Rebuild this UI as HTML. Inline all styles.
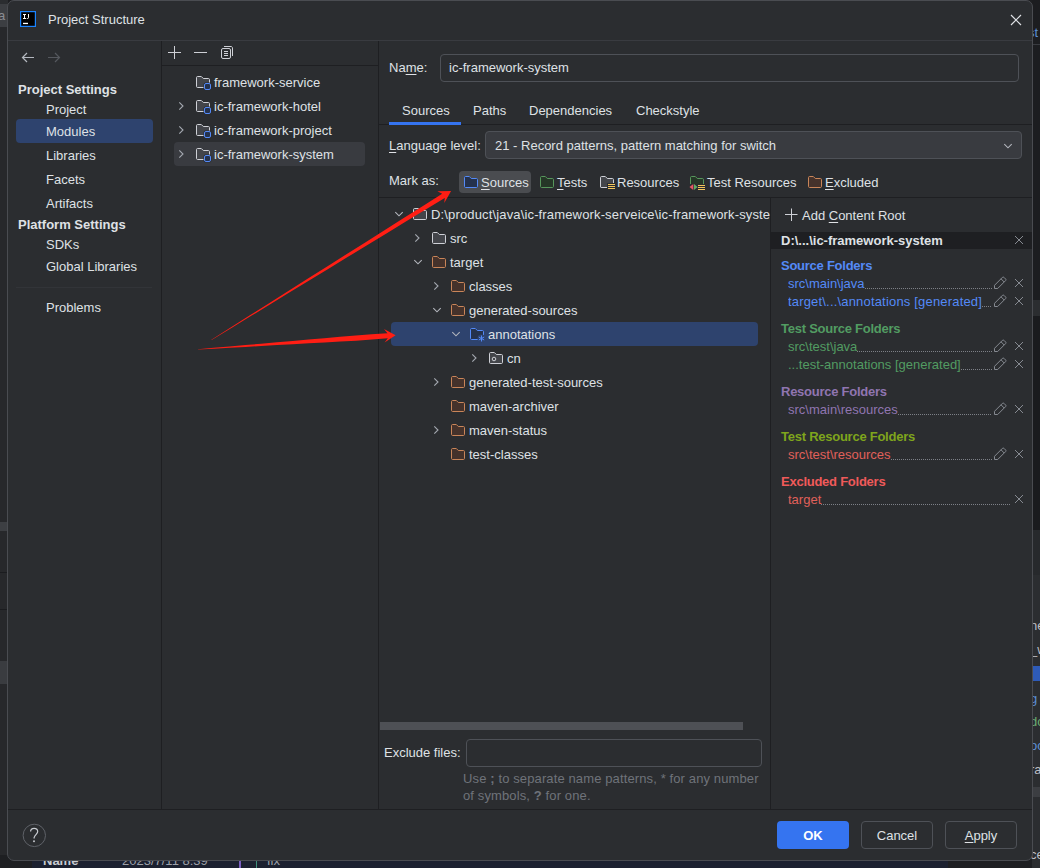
<!DOCTYPE html>
<html><head><meta charset="utf-8">
<style>
*{box-sizing:border-box;margin:0;padding:0}
html,body{width:1040px;height:868px;overflow:hidden;background:#1e1f22;font-family:"Liberation Sans",sans-serif;font-size:13px;color:#dfe1e5}
.a{position:absolute}
.t{position:absolute;white-space:nowrap;line-height:16px;height:16px}
.b{font-weight:bold}
.dlg{position:absolute;left:7px;top:0;width:1026px;height:861px;background:#2b2d30;border:1px solid #4a4c51;border-radius:7px;overflow:hidden}
.hl{position:absolute;height:1px;background:#1e1f22}
.vl{position:absolute;width:1px;background:#1e1f22}
u{text-decoration:underline;text-underline-offset:2px;text-decoration-thickness:1px}
svg.i{position:absolute;width:16px;height:16px;overflow:visible}
.fr{display:flex;height:16px;line-height:16px;white-space:nowrap;overflow:hidden}
.fr span{flex:none}
.fr i{flex:1;min-width:0;background-image:linear-gradient(to right,#7d8087 50%,transparent 50%);background-size:2px 1px;background-repeat:repeat-x;background-position:0 12px}
.dots{position:absolute;height:1px;background-image:linear-gradient(to right,#6f737a 50%,transparent 50%);background-size:2px 1px}
</style></head><body>


<!-- background bits -->
<div class="a" style="left:0;top:0;width:8px;height:868px;background:#27282b"></div>
<div class="a" style="left:0;top:0;width:8px;height:4px;background:#2b2d30"></div>
<div class="a" style="left:0;top:4px;width:8px;height:23px;background:#3c3e42"></div>
<div class="t" style="left:-2px;top:8px;color:#8a8d93">a</div>
<div class="a" style="left:0;top:522px;width:8px;height:9px;background:#3d3f43"></div>
<div class="a" style="left:0;top:572px;width:8px;height:1px;background:#1b1c1f"></div>
<div class="a" style="left:0;top:609px;width:8px;height:1px;background:#1b1c1f"></div>
<div class="a" style="left:0;top:661px;width:8px;height:23px;background:#3a3c40"></div>
<div class="a" style="left:0;top:855px;width:32px;height:13px;background:#1e1f22"></div>
<div class="a" style="left:32px;top:855px;width:916px;height:13px;background:#1c2130;overflow:hidden"><div class="t b" style="left:11px;top:-2px;color:#c9ccd2">Name</div><div class="t" style="left:90px;top:-2px;color:#9da0a8">2023/7/11 8:39</div><div class="t" style="left:235px;top:-2px;color:#9da0a8">fix</div><div class="a" style="left:207px;top:0;width:2px;height:13px;background:#7b5fc0"></div><div class="a" style="left:224px;top:0;width:1px;height:13px;background:#3f8f7a"></div></div>
<div class="a" style="left:948px;top:855px;width:92px;height:13px;background:#1e1f22"></div>
<div class="a" style="left:1032px;top:0;width:8px;height:868px;background:#1c1d20"></div>
<div class="a" style="left:1032px;top:44px;width:8px;height:1px;background:#393b40"></div>
<div class="a" style="left:1032px;top:300px;width:8px;height:16px;background:#2b2d30"></div>
<div class="a" style="left:1032px;top:316px;width:8px;height:214px;background:#1a1b1e"></div>
<div class="a" style="left:1032px;top:530px;width:8px;height:45px;background:#27292c"></div>
<div class="a" style="left:1032px;top:575px;width:8px;height:293px;background:#2b2d30"></div>
<div class="a" style="left:1032px;top:666px;width:8px;height:15px;background:#2e5bb8"></div>
<div class="a" style="left:1032px;top:787px;width:8px;height:10px;background:#3c3e42"></div>
<div class="a" style="left:1030px;top:0;width:10px;height:868px;overflow:hidden">
<div class="t" style="left:-2px;top:25px;color:#5c8fd6">st</div>
<div class="t" style="left:0;top:618px;color:#bcbec4">ne</div>
<div class="t" style="left:0;top:642px;color:#bcbec4">_w</div>
<div class="t" style="left:0;top:691px;color:#5c8fd6">g</div>
<div class="t" style="left:0;top:714px;color:#6aab73">do</div>
<div class="t" style="left:0;top:738px;color:#5c8fd6">oc</div>
<div class="t" style="left:0;top:762px;color:#bcbec4">ra</div>
<div class="t" style="left:0;top:847px;color:#bcbec4">ce</div>
</div>
<div class="dlg"></div>

<!-- title -->
<svg class="a" style="left:20px;top:11px" width="16" height="16" viewBox="0 0 16 16"><rect x="0.6" y="0.6" width="14.8" height="14.8" fill="#000" stroke="#1a84ff" stroke-width="1.2"/><path d="M3 3.5H6M4.5 3.5V7.5M3 7.5H6M6.8 7.5H7.6C8.1 7.5 8.5 7.2 8.5 6.7V3" fill="none" stroke="#fff" stroke-width="1"/><rect x="3" y="11.8" width="5" height="1.3" fill="#fff"/></svg>
<div class="t" style="left:48px;top:12px">Project Structure</div>
<svg class="i" style="left:1008px;top:12px" viewBox="0 0 16 16"><path d="M3 3L13 13M13 3L3 13" stroke="#dfe1e5" stroke-width="1.2"/></svg>
<div class="hl" style="left:8px;top:40px;width:1024px;background:#393b40"></div>

<!-- sidebar -->
<div class="vl" style="left:161px;top:41px;height:769px"></div>
<div class="vl" style="left:378px;top:41px;height:769px"></div>
<svg class="i" style="left:19px;top:50px" viewBox="0 0 16 16"><path d="M15 7.5H3.5M8 3L3.5 7.5L8 12" fill="none" stroke="#b4b8bf" stroke-width="1.2"/></svg>
<svg class="i" style="left:46px;top:50px" viewBox="0 0 16 16"><path d="M2 7.5H13.5M9 3L13.5 7.5L9 12" fill="none" stroke="#55585e" stroke-width="1.2"/></svg>
<div class="t b" style="left:18px;top:82px">Project Settings</div>
<div class="t" style="left:46px;top:102px">Project</div>
<div class="a" style="left:16px;top:119px;width:137px;height:24px;background:#2e436e;border-radius:4px"></div>
<div class="t" style="left:46px;top:124px">Modules</div>
<div class="t" style="left:46px;top:148px">Libraries</div>
<div class="t" style="left:46px;top:172px">Facets</div>
<div class="t" style="left:46px;top:196px">Artifacts</div>
<div class="t b" style="left:18px;top:217px">Platform Settings</div>
<div class="t" style="left:46px;top:237px">SDKs</div>
<div class="t" style="left:46px;top:259px">Global Libraries</div>
<div class="hl" style="left:16px;top:287px;width:136px;background:#323438"></div>
<div class="t" style="left:46px;top:300px">Problems</div>

<!-- middle -->
<svg class="i" style="left:167px;top:44px" viewBox="0 0 16 16"><path d="M7.5 2V15M1 8.5H14" stroke="#ced0d6" stroke-width="1"/></svg>
<svg class="i" style="left:192px;top:44px" viewBox="0 0 16 16"><path d="M2 8.5H15" stroke="#ced0d6" stroke-width="1"/></svg>
<svg class="i" style="left:219px;top:44px" viewBox="0 0 16 16"><path d="M5 2.5H12C12.8 2.5 13.5 3.2 13.5 4V12" fill="none" stroke="#ced0d6"/><rect x="2.5" y="4.5" width="9" height="10" rx="1.5" fill="none" stroke="#ced0d6"/><path d="M5 7.5H9M5 9.5H9M5 11.5H9" stroke="#ced0d6"/></svg>
<div class="hl" style="left:162px;top:65px;width:216px"></div>
<div class="a" style="left:174px;top:142px;width:191px;height:24px;background:#393b40;border-radius:4px"></div>
<svg class="i" style="left:195px;top:74px" viewBox="0 0 16 16"><path d="M1.5 3.5C1.5 2.95 1.95 2.5 2.5 2.5H6.3L8.3 4.5H13.5C14.05 4.5 14.5 4.95 14.5 5.5V12.5C14.5 13.05 14.05 13.5 13.5 13.5H2.5C1.95 13.5 1.5 13.05 1.5 12.5Z" fill="#43454a" stroke="#ced0d6"/><rect x="8.5" y="8.5" width="8" height="8" rx="2" fill="#2b2d30"/><rect x="9.5" y="9.5" width="6" height="6" rx="1.5" fill="#25324d" stroke="#548af7"/></svg>
<div class="t" style="left:214px;top:75px">framework-service</div>
<svg class="i" style="left:174px;top:98px" viewBox="0 0 16 16"><path d="M5.3 4.3L9 8L5.3 11.7" fill="none" stroke="#a4a8b0" stroke-width="1.1"/></svg>
<svg class="i" style="left:195px;top:98px" viewBox="0 0 16 16"><path d="M1.5 3.5C1.5 2.95 1.95 2.5 2.5 2.5H6.3L8.3 4.5H13.5C14.05 4.5 14.5 4.95 14.5 5.5V12.5C14.5 13.05 14.05 13.5 13.5 13.5H2.5C1.95 13.5 1.5 13.05 1.5 12.5Z" fill="#43454a" stroke="#ced0d6"/><rect x="8.5" y="8.5" width="8" height="8" rx="2" fill="#2b2d30"/><rect x="9.5" y="9.5" width="6" height="6" rx="1.5" fill="#25324d" stroke="#548af7"/></svg>
<div class="t" style="left:214px;top:99px">ic-framework-hotel</div>
<svg class="i" style="left:174px;top:122px" viewBox="0 0 16 16"><path d="M5.3 4.3L9 8L5.3 11.7" fill="none" stroke="#a4a8b0" stroke-width="1.1"/></svg>
<svg class="i" style="left:195px;top:122px" viewBox="0 0 16 16"><path d="M1.5 3.5C1.5 2.95 1.95 2.5 2.5 2.5H6.3L8.3 4.5H13.5C14.05 4.5 14.5 4.95 14.5 5.5V12.5C14.5 13.05 14.05 13.5 13.5 13.5H2.5C1.95 13.5 1.5 13.05 1.5 12.5Z" fill="#43454a" stroke="#ced0d6"/><rect x="8.5" y="8.5" width="8" height="8" rx="2" fill="#2b2d30"/><rect x="9.5" y="9.5" width="6" height="6" rx="1.5" fill="#25324d" stroke="#548af7"/></svg>
<div class="t" style="left:214px;top:123px">ic-framework-project</div>
<svg class="i" style="left:174px;top:146px" viewBox="0 0 16 16"><path d="M5.3 4.3L9 8L5.3 11.7" fill="none" stroke="#a4a8b0" stroke-width="1.1"/></svg>
<svg class="i" style="left:195px;top:146px" viewBox="0 0 16 16"><path d="M1.5 3.5C1.5 2.95 1.95 2.5 2.5 2.5H6.3L8.3 4.5H13.5C14.05 4.5 14.5 4.95 14.5 5.5V12.5C14.5 13.05 14.05 13.5 13.5 13.5H2.5C1.95 13.5 1.5 13.05 1.5 12.5Z" fill="#43454a" stroke="#ced0d6"/><rect x="8.5" y="8.5" width="8" height="8" rx="2" fill="#2b2d30"/><rect x="9.5" y="9.5" width="6" height="6" rx="1.5" fill="#25324d" stroke="#548af7"/></svg>
<div class="t" style="left:214px;top:147px">ic-framework-system</div>

<!-- right top -->
<div class="t" style="left:389px;top:60px">Na<u>m</u>e:</div>
<div class="a" style="left:440px;top:54px;width:579px;height:28px;border:1px solid #4e5157;border-radius:4px"></div>
<div class="t" style="left:449px;top:60px">ic-framework-system</div>

<div class="t" style="left:402px;top:103px">Sources</div>
<div class="t" style="left:473px;top:103px">Paths</div>
<div class="t" style="left:529px;top:103px">Dependencies</div>
<div class="t" style="left:636px;top:103px">Checkstyle</div>
<div class="hl" style="left:379px;top:124px;width:653px"></div>
<div class="a" style="left:389px;top:122px;width:72px;height:3px;background:#3574f0"></div>

<div class="t" style="left:389px;top:138px"><u>L</u>anguage level:</div>
<div class="a" style="left:485px;top:131px;width:537px;height:28px;background:#393b40;border:1px solid #4e5157;border-radius:4px"></div>
<div class="t" style="left:495px;top:138px">21 - Record patterns, pattern matching for switch</div>
<svg class="i" style="left:1000px;top:138px" viewBox="0 0 16 16"><path d="M4.3 6.2L8 9.8L11.7 6.2" fill="none" stroke="#b4b7be" stroke-width="1.1"/></svg>

<div class="t" style="left:389px;top:173px">Mark as:</div>
<div class="a" style="left:459px;top:171px;width:72px;height:22px;background:#4a4c50;border-radius:4px"></div>
<svg class="i" style="left:463px;top:174px" viewBox="0 0 16 16"><path d="M1.5 3.5C1.5 2.95 1.95 2.5 2.5 2.5H6.3L8.3 4.5H13.5C14.05 4.5 14.5 4.95 14.5 5.5V12.5C14.5 13.05 14.05 13.5 13.5 13.5H2.5C1.95 13.5 1.5 13.05 1.5 12.5Z" fill="#25324d" stroke="#548af7"/></svg>
<div class="t" style="left:481px;top:175px"><u>S</u>ources</div>
<svg class="i" style="left:539px;top:174px" viewBox="0 0 16 16"><path d="M1.5 3.5C1.5 2.95 1.95 2.5 2.5 2.5H6.3L8.3 4.5H13.5C14.05 4.5 14.5 4.95 14.5 5.5V12.5C14.5 13.05 14.05 13.5 13.5 13.5H2.5C1.95 13.5 1.5 13.05 1.5 12.5Z" fill="#253627" stroke="#57965c"/></svg>
<div class="t" style="left:557px;top:175px"><u>T</u>ests</div>
<svg class="i" style="left:599px;top:174px" viewBox="0 0 16 16"><path d="M1.5 3.5C1.5 2.95 1.95 2.5 2.5 2.5H6.3L8.3 4.5H13.5C14.05 4.5 14.5 4.95 14.5 5.5V12.5C14.5 13.05 14.05 13.5 13.5 13.5H2.5C1.95 13.5 1.5 13.05 1.5 12.5Z" fill="#43454a" stroke="#ced0d6"/><rect x="8" y="9" width="9" height="7" fill="#2b2d30"/><path d="M1.5 9V12.5C1.5 13.05 1.95 13.5 2.5 13.5H8" fill="none" stroke="#ced0d6"/><path d="M9 10.5H16M9 12.5H16M9 14.5H16" stroke="#f2c55c" stroke-width="1.2"/></svg>
<div class="t" style="left:617px;top:175px">Resources</div>
<svg class="i" style="left:689px;top:174px" viewBox="0 0 16 16"><path d="M1.5 3.5C1.5 2.95 1.95 2.5 2.5 2.5H6.3L8.3 4.5H13.5C14.05 4.5 14.5 4.95 14.5 5.5V12.5C14.5 13.05 14.05 13.5 13.5 13.5H2.5C1.95 13.5 1.5 13.05 1.5 12.5Z" fill="#253627" stroke="#57965c"/><rect x="0" y="10" width="17" height="7" fill="#2b2d30"/><path d="M4.3 10L0.5 13L4.3 16Z" fill="#e55765"/><path d="M5 10L8.6 13L5 16Z" fill="#5fad65"/><path d="M9 11.5H16M9 13.5H16M9 15.5H16" stroke="#f2c55c" stroke-width="1.2"/></svg>
<div class="t" style="left:707px;top:175px">Test Resources</div>
<svg class="i" style="left:807px;top:174px" viewBox="0 0 16 16"><path d="M1.5 3.5C1.5 2.95 1.95 2.5 2.5 2.5H6.3L8.3 4.5H13.5C14.05 4.5 14.5 4.95 14.5 5.5V12.5C14.5 13.05 14.05 13.5 13.5 13.5H2.5C1.95 13.5 1.5 13.05 1.5 12.5Z" fill="#45322b" stroke="#c98559"/></svg>
<div class="t" style="left:825px;top:175px"><u>E</u>xcluded</div>
<div class="hl" style="left:379px;top:197px;width:653px"></div>
<div class="vl" style="left:770px;top:198px;height:612px"></div>

<!-- tree -->
<div class="a" style="left:391px;top:322px;width:367px;height:24px;background:#2e436e;border-radius:4px"></div>
<svg class="i" style="left:391px;top:206px" viewBox="0 0 16 16"><path d="M4.3 6.2L8 9.8L11.7 6.2" fill="none" stroke="#b4b7be" stroke-width="1.1"/></svg>
<svg class="i" style="left:412px;top:206px" viewBox="0 0 16 16"><path d="M1.5 3.5C1.5 2.95 1.95 2.5 2.5 2.5H6.3L8.3 4.5H13.5C14.05 4.5 14.5 4.95 14.5 5.5V12.5C14.5 13.05 14.05 13.5 13.5 13.5H2.5C1.95 13.5 1.5 13.05 1.5 12.5Z" fill="#43454a" stroke="#ced0d6"/></svg>
<div class="a" style="left:431px;top:198px;width:339px;height:30px;overflow:hidden"><div class="t" style="left:0;top:9px;letter-spacing:0.15px">D:\product\java\ic-framework-serveice\ic-framework-system</div></div>

<svg class="i" style="left:410px;top:230px" viewBox="0 0 16 16"><path d="M5.3 4.3L9 8L5.3 11.7" fill="none" stroke="#a4a8b0" stroke-width="1.1"/></svg>
<svg class="i" style="left:431px;top:230px" viewBox="0 0 16 16"><path d="M1.5 3.5C1.5 2.95 1.95 2.5 2.5 2.5H6.3L8.3 4.5H13.5C14.05 4.5 14.5 4.95 14.5 5.5V12.5C14.5 13.05 14.05 13.5 13.5 13.5H2.5C1.95 13.5 1.5 13.05 1.5 12.5Z" fill="#43454a" stroke="#ced0d6"/></svg>
<div class="t" style="left:450px;top:231px">src</div>

<svg class="i" style="left:410px;top:254px" viewBox="0 0 16 16"><path d="M4.3 6.2L8 9.8L11.7 6.2" fill="none" stroke="#b4b7be" stroke-width="1.1"/></svg>
<svg class="i" style="left:431px;top:254px" viewBox="0 0 16 16"><path d="M1.5 3.5C1.5 2.95 1.95 2.5 2.5 2.5H6.3L8.3 4.5H13.5C14.05 4.5 14.5 4.95 14.5 5.5V12.5C14.5 13.05 14.05 13.5 13.5 13.5H2.5C1.95 13.5 1.5 13.05 1.5 12.5Z" fill="#45322b" stroke="#c98559"/></svg>
<div class="t" style="left:450px;top:255px">target</div>

<svg class="i" style="left:429px;top:278px" viewBox="0 0 16 16"><path d="M5.3 4.3L9 8L5.3 11.7" fill="none" stroke="#a4a8b0" stroke-width="1.1"/></svg>
<svg class="i" style="left:450px;top:278px" viewBox="0 0 16 16"><path d="M1.5 3.5C1.5 2.95 1.95 2.5 2.5 2.5H6.3L8.3 4.5H13.5C14.05 4.5 14.5 4.95 14.5 5.5V12.5C14.5 13.05 14.05 13.5 13.5 13.5H2.5C1.95 13.5 1.5 13.05 1.5 12.5Z" fill="#45322b" stroke="#c98559"/></svg>
<div class="t" style="left:469px;top:279px">classes</div>

<svg class="i" style="left:429px;top:302px" viewBox="0 0 16 16"><path d="M4.3 6.2L8 9.8L11.7 6.2" fill="none" stroke="#b4b7be" stroke-width="1.1"/></svg>
<svg class="i" style="left:450px;top:302px" viewBox="0 0 16 16"><path d="M1.5 3.5C1.5 2.95 1.95 2.5 2.5 2.5H6.3L8.3 4.5H13.5C14.05 4.5 14.5 4.95 14.5 5.5V12.5C14.5 13.05 14.05 13.5 13.5 13.5H2.5C1.95 13.5 1.5 13.05 1.5 12.5Z" fill="#45322b" stroke="#c98559"/></svg>
<div class="t" style="left:469px;top:303px">generated-sources</div>

<svg class="i" style="left:448px;top:326px" viewBox="0 0 16 16"><path d="M4.3 6.2L8 9.8L11.7 6.2" fill="none" stroke="#b4b7be" stroke-width="1.1"/></svg>
<svg class="i" style="left:469px;top:326px" viewBox="0 0 16 16"><path d="M1.5 3.5C1.5 2.95 1.95 2.5 2.5 2.5H6.3L8.3 4.5H13.5C14.05 4.5 14.5 4.95 14.5 5.5V12.5C14.5 13.05 14.05 13.5 13.5 13.5H2.5C1.95 13.5 1.5 13.05 1.5 12.5Z" fill="#25324d" stroke="#548af7"/><circle cx="12.5" cy="12.5" r="4" fill="#2e436e"/><path d="M12.5 9.5V15.5M9.8 11L15.2 14M9.8 14L15.2 11" stroke="#548af7" stroke-width="1"/></svg>
<div class="t" style="left:488px;top:327px">annotations</div>

<svg class="i" style="left:467px;top:350px" viewBox="0 0 16 16"><path d="M5.3 4.3L9 8L5.3 11.7" fill="none" stroke="#a4a8b0" stroke-width="1.1"/></svg>
<svg class="i" style="left:488px;top:350px" viewBox="0 0 16 16"><path d="M1.5 3.5C1.5 2.95 1.95 2.5 2.5 2.5H6.3L8.3 4.5H13.5C14.05 4.5 14.5 4.95 14.5 5.5V12.5C14.5 13.05 14.05 13.5 13.5 13.5H2.5C1.95 13.5 1.5 13.05 1.5 12.5Z" fill="#43454a" stroke="#ced0d6"/><circle cx="6" cy="9" r="1.8" fill="none" stroke="#ced0d6"/></svg>
<div class="t" style="left:507px;top:351px">cn</div>

<svg class="i" style="left:429px;top:374px" viewBox="0 0 16 16"><path d="M5.3 4.3L9 8L5.3 11.7" fill="none" stroke="#a4a8b0" stroke-width="1.1"/></svg>
<svg class="i" style="left:450px;top:374px" viewBox="0 0 16 16"><path d="M1.5 3.5C1.5 2.95 1.95 2.5 2.5 2.5H6.3L8.3 4.5H13.5C14.05 4.5 14.5 4.95 14.5 5.5V12.5C14.5 13.05 14.05 13.5 13.5 13.5H2.5C1.95 13.5 1.5 13.05 1.5 12.5Z" fill="#45322b" stroke="#c98559"/></svg>
<div class="t" style="left:469px;top:375px">generated-test-sources</div>

<svg class="i" style="left:450px;top:398px" viewBox="0 0 16 16"><path d="M1.5 3.5C1.5 2.95 1.95 2.5 2.5 2.5H6.3L8.3 4.5H13.5C14.05 4.5 14.5 4.95 14.5 5.5V12.5C14.5 13.05 14.05 13.5 13.5 13.5H2.5C1.95 13.5 1.5 13.05 1.5 12.5Z" fill="#45322b" stroke="#c98559"/></svg>
<div class="t" style="left:469px;top:399px">maven-archiver</div>

<svg class="i" style="left:429px;top:422px" viewBox="0 0 16 16"><path d="M5.3 4.3L9 8L5.3 11.7" fill="none" stroke="#a4a8b0" stroke-width="1.1"/></svg>
<svg class="i" style="left:450px;top:422px" viewBox="0 0 16 16"><path d="M1.5 3.5C1.5 2.95 1.95 2.5 2.5 2.5H6.3L8.3 4.5H13.5C14.05 4.5 14.5 4.95 14.5 5.5V12.5C14.5 13.05 14.05 13.5 13.5 13.5H2.5C1.95 13.5 1.5 13.05 1.5 12.5Z" fill="#45322b" stroke="#c98559"/></svg>
<div class="t" style="left:469px;top:423px">maven-status</div>

<svg class="i" style="left:450px;top:446px" viewBox="0 0 16 16"><path d="M1.5 3.5C1.5 2.95 1.95 2.5 2.5 2.5H6.3L8.3 4.5H13.5C14.05 4.5 14.5 4.95 14.5 5.5V12.5C14.5 13.05 14.05 13.5 13.5 13.5H2.5C1.95 13.5 1.5 13.05 1.5 12.5Z" fill="#45322b" stroke="#c98559"/></svg>
<div class="t" style="left:469px;top:447px">test-classes</div>

<div class="a" style="left:380px;top:722px;width:363px;height:8px;background:#4e5055"></div>

<div class="t" style="left:384px;top:745px">Exclude files:</div>
<div class="a" style="left:466px;top:739px;width:296px;height:28px;border:1px solid #4e5157;border-radius:4px"></div>
<div class="t" style="left:463px;top:771px;color:#6f737a;letter-spacing:0.12px">Use <b>;</b> to separate name patterns, * for any number</div>
<div class="t" style="left:463px;top:788px;color:#6f737a;letter-spacing:0.12px">of symbols, <b>?</b> for one.</div>

<!-- right panel -->
<svg class="i" style="left:783px;top:207px" viewBox="0 0 16 16"><path d="M8.5 1.5V14M2 7.5H14.5" stroke="#ced0d6" stroke-width="1"/></svg>
<div class="t" style="left:802px;top:208px">Add <u>C</u>ontent Root</div>
<div class="a" style="left:771px;top:232px;width:261px;height:17px;background:#1e1f22"></div>
<div class="t b" style="left:781px;top:233px">D:\...\ic-framework-system</div>
<svg class="i" style="left:1011px;top:232px" viewBox="0 0 16 16"><path d="M4 4L12 12M12 4L4 12" stroke="#868a91" stroke-width="1"/></svg>

<div class="t b" style="left:781px;top:258px;letter-spacing:-0.25px;color:#548af7">Source Folders</div>
<div class="a fr" style="left:788px;top:276px;width:204px;color:#548af7"><span>src\main\java</span><i></i></div>
<svg class="i" style="left:992px;top:275px" viewBox="0 0 16 16"><path d="M2.5 13.5V10.3L10.5 2.3C10.9 1.9 11.5 1.9 11.9 2.3L13.7 4.1C14.1 4.5 14.1 5.1 13.7 5.5L5.7 13.5Z M9 3.8L12.2 7" fill="none" stroke="#868a91" stroke-width="1"/></svg>
<svg class="i" style="left:1011px;top:275px" viewBox="0 0 16 16"><path d="M4 4L12 12M12 4L4 12" stroke="#868a91" stroke-width="1"/></svg>
<div class="a fr" style="left:788px;top:294px;width:204px;color:#548af7"><span style="letter-spacing:0.18px">target\...\annotations [generated]</span><i></i></div>
<svg class="i" style="left:992px;top:293px" viewBox="0 0 16 16"><path d="M2.5 13.5V10.3L10.5 2.3C10.9 1.9 11.5 1.9 11.9 2.3L13.7 4.1C14.1 4.5 14.1 5.1 13.7 5.5L5.7 13.5Z M9 3.8L12.2 7" fill="none" stroke="#868a91" stroke-width="1"/></svg>
<svg class="i" style="left:1011px;top:293px" viewBox="0 0 16 16"><path d="M4 4L12 12M12 4L4 12" stroke="#868a91" stroke-width="1"/></svg>

<div class="t b" style="left:781px;top:321px;letter-spacing:-0.25px;color:#529c62">Test Source Folders</div>
<div class="a fr" style="left:788px;top:339px;width:204px;color:#529c62"><span>src\test\java</span><i></i></div>
<svg class="i" style="left:992px;top:338px" viewBox="0 0 16 16"><path d="M2.5 13.5V10.3L10.5 2.3C10.9 1.9 11.5 1.9 11.9 2.3L13.7 4.1C14.1 4.5 14.1 5.1 13.7 5.5L5.7 13.5Z M9 3.8L12.2 7" fill="none" stroke="#868a91" stroke-width="1"/></svg>
<svg class="i" style="left:1011px;top:338px" viewBox="0 0 16 16"><path d="M4 4L12 12M12 4L4 12" stroke="#868a91" stroke-width="1"/></svg>
<div class="a fr" style="left:788px;top:357px;width:204px;color:#529c62"><span>...test-annotations [generated]</span><i></i></div>
<svg class="i" style="left:992px;top:356px" viewBox="0 0 16 16"><path d="M2.5 13.5V10.3L10.5 2.3C10.9 1.9 11.5 1.9 11.9 2.3L13.7 4.1C14.1 4.5 14.1 5.1 13.7 5.5L5.7 13.5Z M9 3.8L12.2 7" fill="none" stroke="#868a91" stroke-width="1"/></svg>
<svg class="i" style="left:1011px;top:356px" viewBox="0 0 16 16"><path d="M4 4L12 12M12 4L4 12" stroke="#868a91" stroke-width="1"/></svg>

<div class="t b" style="left:781px;top:384px;letter-spacing:-0.25px;color:#9075b0">Resource Folders</div>
<div class="a fr" style="left:788px;top:402px;width:204px;color:#9075b0"><span>src\main\resources</span><i></i></div>
<svg class="i" style="left:992px;top:401px" viewBox="0 0 16 16"><path d="M2.5 13.5V10.3L10.5 2.3C10.9 1.9 11.5 1.9 11.9 2.3L13.7 4.1C14.1 4.5 14.1 5.1 13.7 5.5L5.7 13.5Z M9 3.8L12.2 7" fill="none" stroke="#868a91" stroke-width="1"/></svg>
<svg class="i" style="left:1011px;top:401px" viewBox="0 0 16 16"><path d="M4 4L12 12M12 4L4 12" stroke="#868a91" stroke-width="1"/></svg>

<div class="t b" style="left:781px;top:429px;letter-spacing:-0.25px;color:#7fa51c">Test Resource Folders</div>
<div class="a fr" style="left:788px;top:447px;width:204px;color:#e0605a"><span>src\test\resources</span><i></i></div>
<svg class="i" style="left:992px;top:446px" viewBox="0 0 16 16"><path d="M2.5 13.5V10.3L10.5 2.3C10.9 1.9 11.5 1.9 11.9 2.3L13.7 4.1C14.1 4.5 14.1 5.1 13.7 5.5L5.7 13.5Z M9 3.8L12.2 7" fill="none" stroke="#868a91" stroke-width="1"/></svg>
<svg class="i" style="left:1011px;top:446px" viewBox="0 0 16 16"><path d="M4 4L12 12M12 4L4 12" stroke="#868a91" stroke-width="1"/></svg>

<div class="t b" style="left:781px;top:474px;letter-spacing:-0.25px;color:#f05a5a">Excluded Folders</div>
<div class="a fr" style="left:788px;top:492px;width:223px;color:#e0605a"><span>target</span><i></i></div>
<svg class="i" style="left:1011px;top:491px" viewBox="0 0 16 16"><path d="M4 4L12 12M12 4L4 12" stroke="#868a91" stroke-width="1"/></svg>

<!-- bottom -->
<div class="hl" style="left:8px;top:809px;width:1024px"></div>
<svg class="a" style="left:22px;top:823px" width="25" height="25" viewBox="0 0 25 25"><circle cx="12.3" cy="12.4" r="11.2" fill="none" stroke="#5f6268" stroke-width="1"/><path d="M8.6 8.6C8.6 6.4 10.1 5.4 12.1 5.4C14.3 5.4 15.7 6.8 15.7 8.6C15.7 10.9 13.1 11.6 12.1 14.6V15.6" fill="none" stroke="#c9ccd2" stroke-width="1.2"/><circle cx="12" cy="18.2" r="0.95" fill="#c9ccd2"/></svg>
<div class="a" style="left:777px;top:821px;width:72px;height:28px;background:#3574f0;border-radius:4px"></div>
<div class="t b" style="left:777px;top:828px;width:72px;text-align:center;color:#fff">OK</div>
<div class="a" style="left:861px;top:821px;width:72px;height:28px;border:1px solid #4e5157;border-radius:4px"></div>
<div class="t" style="left:861px;top:828px;width:72px;text-align:center">Cancel</div>
<div class="a" style="left:945px;top:821px;width:72px;height:28px;border:1px solid #4e5157;border-radius:4px"></div>
<div class="t" style="left:945px;top:828px;width:72px;text-align:center"><u>A</u>pply</div>

<!-- arrows -->
<svg class="a" style="left:0;top:0" width="1040" height="868">
<polygon fill="#ff1e14" points="451.10,191.10 444.30,203.00 444.73,197.91 425.31,209.75 405.88,221.58 386.45,233.42 367.02,245.26 347.60,257.10 328.17,268.94 308.74,280.78 289.31,292.62 269.89,304.45 250.46,316.29 231.03,328.13 211.61,339.97 211.39,339.63 230.63,327.48 249.86,315.32 269.09,303.17 288.32,291.01 307.55,278.86 326.78,266.71 346.02,254.55 365.25,242.40 384.48,230.25 403.71,218.09 422.94,205.94 442.17,193.78 437.40,191.20"/>
<polygon fill="#ff1e14" points="395.60,335.20 384.60,342.40 387.81,338.37 372.01,339.50 356.20,340.64 340.38,341.53 324.57,342.43 308.75,343.33 292.93,344.22 277.11,345.12 261.29,346.01 245.47,346.91 229.65,347.81 213.83,348.70 198.01,349.60 197.99,349.20 213.77,347.83 229.55,346.45 245.34,345.08 261.12,343.70 276.91,342.33 292.69,340.95 308.48,339.58 324.26,338.20 340.05,336.83 355.83,335.45 371.63,334.32 387.43,333.18 384.00,329.10"/>
</svg>
</body></html>
